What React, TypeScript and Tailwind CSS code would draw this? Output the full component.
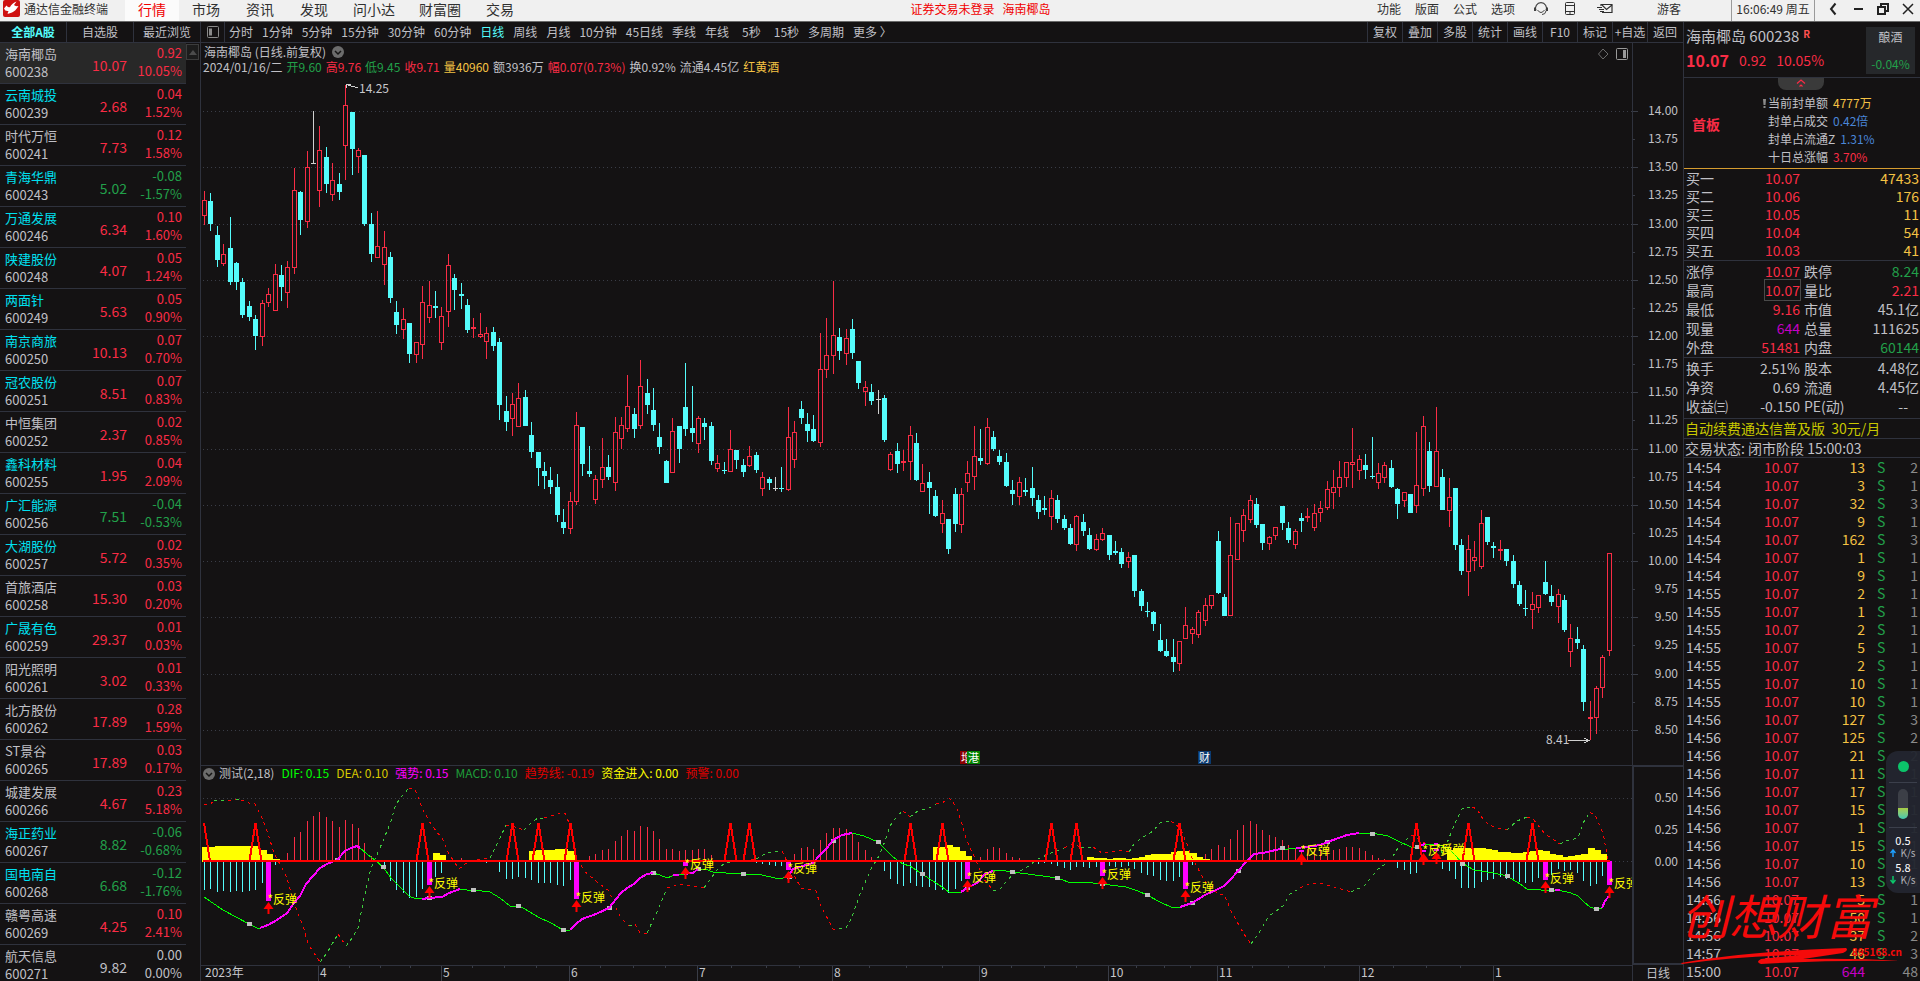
import clsx from "clsx";
import type { ReactNode } from "react";

type Tone = "up" | "down" | "flat" | "warn" | "info" | "last";

const toneClass: Record<Tone, string> = {
  up: "text-[#f92c45]",
  down: "text-[#22a04a]",
  flat: "text-[#c0c0c6]",
  warn: "text-[#f5c244]",
  info: "text-[#4a86d8]",
  last: "text-[#c400c4]",
};

const mainNav = ["行情", "市场", "资讯", "发现", "问小达", "财富圈", "交易"];
const sideNav = ["功能", "版面", "公式", "选项"];
const periods = [
  "分时", "1分钟", "5分钟", "15分钟", "30分钟", "60分钟", "日线", "周线", "月线",
  "10分钟", "45日线", "季线", "年线", "5秒", "15秒", "多周期", "更多 〉",
];
const tools = ["复权", "叠加", "多股", "统计", "画线", "F10", "标记", "+自选", "返回"];

// name, code, price, change, percent, name shown in cyan
const stocks: [string, string, string, string, string, boolean][] = [
  ["海南椰岛", "600238", "10.07", "0.92", "10.05%", false],
  ["云南城投", "600239", "2.68", "0.04", "1.52%", true],
  ["时代万恒", "600241", "7.73", "0.12", "1.58%", false],
  ["青海华鼎", "600243", "5.02", "-0.08", "-1.57%", true],
  ["万通发展", "600246", "6.34", "0.10", "1.60%", true],
  ["陕建股份", "600248", "4.07", "0.05", "1.24%", true],
  ["两面针", "600249", "5.63", "0.05", "0.90%", true],
  ["南京商旅", "600250", "10.13", "0.07", "0.70%", true],
  ["冠农股份", "600251", "8.51", "0.07", "0.83%", true],
  ["中恒集团", "600252", "2.37", "0.02", "0.85%", false],
  ["鑫科材料", "600255", "1.95", "0.04", "2.09%", true],
  ["广汇能源", "600256", "7.51", "-0.04", "-0.53%", true],
  ["大湖股份", "600257", "5.72", "0.02", "0.35%", true],
  ["首旅酒店", "600258", "15.30", "0.03", "0.20%", false],
  ["广晟有色", "600259", "29.37", "0.01", "0.03%", true],
  ["阳光照明", "600261", "3.02", "0.01", "0.33%", false],
  ["北方股份", "600262", "17.89", "0.28", "1.59%", false],
  ["ST景谷", "600265", "17.89", "0.03", "0.17%", false],
  ["城建发展", "600266", "4.67", "0.23", "5.18%", false],
  ["海正药业", "600267", "8.82", "-0.06", "-0.68%", true],
  ["国电南自", "600268", "6.68", "-0.12", "-1.76%", true],
  ["赣粤高速", "600269", "4.25", "0.10", "2.41%", false],
  ["航天信息", "600271", "9.82", "0.00", "0.00%", false],
];

const dayInfo: [string, Tone][] = [
  ["2024/01/16/二", "flat"],
  ["开9.60", "down"],
  ["高9.76", "up"],
  ["低9.45", "down"],
  ["收9.71", "up"],
  ["量40960", "warn"],
  ["额3936万", "flat"],
  ["幅0.07(0.73%)", "up"],
  ["换0.92%", "flat"],
  ["流通4.45亿", "flat"],
  ["红黄酒", "warn"],
];

const priceLabels = Array.from({ length: 23 }, (_, n) => (14 - n * 0.25).toFixed(2));
const priceGrid = [111, 167, 224, 280, 336, 392, 449, 505, 561, 617, 674, 730];

// one candle per entry: kind (r up, c down, w doji) high top bottom low
const candles = `
r191 200 216 225,c193 201 224 231,c226 235 260 267,r244 254 264 266,c217 248 282 285,c262 263 282 290,
c278 282 315 318,c301 306 317 321,c315 319 336 350,r300 303 337 346,r288 294 303 307,r264 274 311 311,
c265 275 287 301,r261 267 293 308,r168 190 268 274,c191 192 220 235,r151 167 222 228,w111 163 164 164,
r126 150 191 207,c147 157 184 193,r163 180 195 201,c173 184 192 200,r85 105 146 180,c112 112 149 175,
r148 150 157 173,c155 155 224 226,c213 224 254 262,r211 246 258 258,r231 247 265 285,c252 257 298 303,
c301 312 325 334,r308 319 330 339,c323 323 354 363,r342 342 355 363,r286 302 345 359,r281 305 318 323,
c291 306 308 318,r307 316 343 350,r254 265 312 327,c274 278 290 310,c283 294 296 309,c299 305 330 333,
r318 327 329 338,r313 334 337 338,r327 333 342 359,c327 332 346 351,c338 342 405 420,c396 411 422 431,
r393 404 419 436,r383 398 427 427,c390 397 426 426,c422 435 452 458,c452 452 468 486,c462 471 476 489,
c467 480 487 494,c474 487 515 522,c509 522 528 534,r492 501 529 534,r412 425 502 505,c427 427 464 476,
c446 471 474 477,r475 479 500 504,r438 467 480 488,c455 467 477 480,r417 432 483 491,r417 425 439 449,
r375 406 429 432,c408 414 429 438,r360 386 426 429,c379 393 405 414,c388 410 425 431,c423 437 447 454,
c460 461 483 483,r418 431 473 473,c426 426 449 463,c363 407 429 436,c386 428 433 442,r416 418 444 453,
c418 423 427 440,c422 426 461 465,r455 463 469 472,c462 470 471 474,r430 449 472 472,c450 450 460 469,
c459 465 472 477,r446 456 466 467,c452 455 470 473,r472 477 489 496,c477 479 483 490,w477 488 489 491,
c467 488 489 492,r407 437 490 491,r421 432 460 468,c401 409 418 424,c413 424 431 442,c415 429 441 442,
r333 369 443 447,r318 355 370 378,r281 335 356 374,c328 337 351 360,r329 338 354 365,c319 329 353 359,
c361 361 383 389,r381 387 392 406,c384 392 401 405,w390 399 400 414,c395 398 440 442,r452 454 470 471,
c443 451 464 473,r450 461 463 471,r426 435 462 480,c433 443 480 481,r464 483 492 492,c472 482 488 514,
c490 496 516 517,r500 513 524 533,c519 519 549 554,c488 494 524 532,r488 494 525 533,r461 473 483 492,
r426 456 477 490,c429 458 461 465,r418 427 464 465,c431 437 449 451,c450 456 462 465,c453 462 486 487,
c480 490 494 505,r477 482 497 505,c478 490 492 496,c467 488 498 506,c495 500 512 519,c496 508 510 515,
r490 498 517 530,c495 500 519 523,c515 519 528 530,c524 528 544 545,r515 516 545 551,c514 522 531 536,
c528 535 549 550,r534 539 550 551,r528 533 540 541,c535 535 555 560,c541 551 553 555,c548 552 564 568,
r552 557 562 568,c555 555 591 597,c589 591 606 611,c602 611 612 617,c611 612 624 631,c624 640 651 652,
c639 651 656 657,c639 657 662 672,r641 641 664 671,r607 625 639 639,r627 629 634 644,r610 612 635 638,
r598 605 621 626,r595 595 606 609,c531 541 593 594,c594 597 616 616,r517 555 616 616,r523 523 560 560,
r509 515 531 542,r495 500 520 523,c498 504 525 528,c524 524 543 550,r536 537 544 550,r527 527 536 540,
c506 506 523 530,c522 528 540 543,r529 531 545 549,c513 518 521 532,r508 516 518 522,r504 513 528 531,
r501 508 513 522,r481 489 508 510,r470 487 493 509,r461 477 488 497,r462 462 478 487,r428 462 465 488,
r455 459 471 480,c454 465 470 479,c437 476 477 479,r463 473 483 489,r462 465 478 483,c460 468 487 488,
c488 489 504 519,r492 492 501 507,c494 494 513 513,r432 485 506 513,r416 426 489 496,c442 451 486 492,
r407 451 487 487,c469 477 510 510,r478 497 511 527,c488 488 545 550,c539 545 571 575,r535 549 572 596,
r541 557 561 571,r510 523 567 569,c517 517 542 545,c542 546 548 558,r540 549 551 560,c549 549 561 566,
c555 561 584 588,c581 585 604 606,c590 608 609 616,r592 604 610 629,r595 595 608 613,c561 582 594 595,
c585 596 602 606,r589 594 607 623,c595 600 630 632,r624 638 652 667,c627 639 643 649,c645 649 702 711,
r701 717 719 740,r686 688 718 734,r655 657 688 698,r553 553 651 656`
  .trim()
  .split(/,\s*/)
  .map((row) => ({ kind: row[0], v: row.slice(1).split(" ").map(Number) }));

// centre of the n-th bar, snapped to a pixel
const barX = (n: number) => Math.floor(204.5 + n * 6.415) + 0.5;

type Run = [number, number[]];

const upBars: Run[] = [
  [13, [853, 837, 832, 821, 816, 812, 817, 821, 827, 820, 824, 828, 843, 856]],
  [40, [858]],
  [60, [856, 854, 850, 849, 841, 836, 830, 831, 826, 827, 831, 839, 849, 849, 851, 850, 850, 849, 849, 855]],
  [92, [854, 848, 847, 849, 840, 833, 828, 828, 829, 833, 842, 850, 857]],
  [121, [857, 849, 847, 848, 853, 857, 858]],
  [156, [854, 849, 845, 847, 839, 830, 825, 821, 824, 830, 835, 837, 840, 845, 848, 851, 849, 849, 849, 849, 850, 849, 847, 847, 848, 851, 855, 858, 859]],
];

const downBars: Run[] = [
  [0, [890, 889, 892, 891, 892, 891, 892, 891, 890, 883]],
  [11, [865]],
  [28, [869, 881, 890, 893, 898, 897, 889]],
  [36, [877, 873]],
  [44, [863, 862, 872, 879, 879, 877, 878, 880, 883, 883, 883, 885, 886, 880]],
  [86, [863, 864, 865, 866, 866]],
  [106, [871, 879, 884, 886, 883, 886, 887, 887, 890, 890, 893, 889, 881]],
  [130, [864, 863, 864, 866, 868, 870, 867, 867, 868, 867]],
  [141, [866, 867, 867, 866, 869, 873, 875, 876, 880, 881, 881, 877]],
  [154, [865]],
  [186, [868, 870, 874, 873, 864]],
  [193, [869, 871, 879, 888, 888, 888, 882, 880, 879, 877, 879, 880, 882, 883, 882, 878]],
  [210, [875, 869, 871, 870, 873, 881, 886, 884, 876]],
];

const fundBars: Run[] = [
  [0, [847, 847, 846, 846, 846, 846, 846, 846, 846, 850, 854, 859]],
  [36, [853, 855]],
  [51, [851, 850, 850, 850, 849, 849, 851]],
  [114, [847, 847, 845, 847, 851, 856]],
  [138, [857, 858, 858, 859, 858, 858, 859, 858, 857, 855, 854, 854, 854, 852, 851, 851, 853, 857, 859]],
  [194, [850, 848, 848, 848, 848, 848, 849, 850, 852, 852, 853, 853, 852, 851, 850, 851, 854, 855, 857, 856, 855, 854, 848, 850, 854]],
];

const warnings = [0, 8, 34, 48, 52, 57, 82, 85, 110, 115, 132, 136, 152, 189, 197, 207];

// bar index and the level that the marker reaches
const rebounds: [number, number][] = [
  [10, 901], [35, 885], [58, 899], [75, 866], [91, 870], [119, 879], [140, 876],
  [153, 889], [171, 852], [190, 852], [192, 851], [209, 880], [219, 885],
];

const difLine =
  "204,897 223,910 236,917 249,924 257,928 260,928 268,925 277,920 287,913 294,903 300,896 306,884 313,876 320,868 327,864 337,860 345,851 351,848 357,846 360,848 367,854 376,861 383,867 391,878 400,887 409,896 416,899 429,898 442,897 449,893 460,889 467,890 473,890 490,892 500,898 510,906 518,906 525,909 538,917 551,923 563,930 570,930 576,924 582,919 596,914 609,908 616,899 621,893 627,888 634,884 640,878 647,874 653,873 660,875 667,878 672,876 685,874 693,873 698,869 705,869 713,872 726,873 743,874 762,875 779,879 787,877 793,869 803,866 813,863 820,855 827,848 833,840 842,835 852,833 864,836 878,842 885,849 893,857 903,864 910,866 922,874 936,883 942,887 949,892 956,893 961,892 967,888 977,883 985,874 993,871 999,870 1012,872 1028,874 1057,878 1071,883 1083,882 1102,884 1126,887 1138,891 1147,895 1160,902 1173,908 1180,907 1192,903 1205,895 1216,890 1224,886 1231,879 1238,871 1246,862 1254,854 1263,853 1280,849 1288,849 1296,848 1307,847 1320,845 1333,840 1347,835 1359,833 1372,833 1388,836 1398,841 1411,847 1418,847 1427,844 1437,844 1449,849 1456,856 1462,863 1474,870 1494,873 1507,876 1520,884 1527,889 1541,890 1558,890 1571,893 1578,896 1584,902 1590,907 1596,909 1602,908 1605,901 1609,896";

const strongLines = [
  "260,928 268,925 277,920 287,913 294,903 300,896 306,884 313,876 320,868 327,864 337,860 345,851 351,848 357,846 360,848",
  "422,899 429,898 442,897 449,893 460,889",
  "570,930 576,924 582,919 596,914 609,908 616,899 621,893 627,888 634,884 640,878 647,874 653,873",
  "673,875 679,875",
  "684,874 693,873 698,869",
  "787,877 793,869 803,866 813,863 820,855 827,848 833,840 842,835 852,833",
  "961,892 967,888 977,883 985,874 993,871",
  "1180,907 1192,903 1205,895 1216,890 1224,886 1231,879 1238,871 1246,862 1254,854 1263,853 1280,849",
  "1296,848 1307,847 1320,845 1333,840 1347,835 1359,833",
  "1419,846 1425,844",
  "1434,844 1438,844",
  "1555,890 1560,890",
  "1602,908 1605,901 1609,896",
];

const handles: [number, number][] = [
  [249, 924], [337, 860], [383, 867], [429, 898], [473, 890], [518, 906], [563, 930], [609, 908],
  [653, 873], [698, 869], [743, 874], [789, 877], [833, 841], [878, 842], [922, 874], [967, 888],
  [1012, 872], [1057, 878], [1102, 884], [1147, 895], [1192, 903], [1238, 871], [1282, 848],
  [1327, 842], [1372, 834], [1417, 847], [1462, 864], [1507, 876], [1551, 890], [1596, 909],
];

const trendSegments: ["r" | "g", string][] = [
  ["r", "204,804 210,805 214,800"],
  ["g", "214,800 228,801"],
  ["r", "228,801 236,799"],
  ["g", "236,799 241,800"],
  ["r", "241,800 249,803 255,804 262,818 268,834 274,853 282,868 287,878 294,903 304,929 308,944 320,962"],
  ["g", "320,962 327,953 338,934"],
  ["r", "338,934 346,946"],
  ["g", "346,946 353,937 358,928 364,898 371,868 383,841 391,821 396,804 403,795 409,788"],
  ["r", "409,788 415,789 422,808 429,821 436,831 442,838 449,854 459,869 465,864 473,860 490,858"],
  ["g", "490,858 500,838 506,825"],
  ["r", "506,825 512,826 524,830"],
  ["g", "524,830 531,823 538,818 544,818"],
  ["r", "544,818 558,814 565,813 569,823 576,856 584,871 596,881 609,891 614,904 621,918 629,926"],
  ["g", "629,926 635,924"],
  ["r", "635,924 640,933 647,933"],
  ["g", "647,933 656,914 667,888"],
  ["r", "667,888 679,884 693,886 704,888"],
  ["g", "704,888 711,878 718,869 726,862 730,862"],
  ["r", "730,862 756,859"],
  ["g", "756,859 767,853 775,851 782,851"],
  ["r", "782,851 789,866 801,888 816,891 820,904 833,929 839,929"],
  ["g", "839,929 846,928 852,917 860,894 871,869 879,856 885,841 890,826 898,815 903,811"],
  ["r", "903,811 910,817"],
  ["g", "910,817 918,811 929,808 936,804"],
  ["r", "936,804 942,803 949,798 956,806 961,821 967,841 974,856 983,878 993,890"],
  ["g", "993,890 999,890 1007,881 1012,875 1026,868 1038,859 1051,853 1064,848"],
  ["r", "1064,848 1073,844 1081,847"],
  ["g", "1081,847 1093,847"],
  ["r", "1093,847 1102,853 1122,850 1129,852"],
  ["g", "1129,852 1134,844 1142,838 1153,831 1160,823 1171,821"],
  ["r", "1171,821 1180,828 1187,844 1192,858 1205,881 1218,894 1224,894 1232,913 1244,934 1251,944"],
  ["g", "1251,944 1260,931 1269,916 1283,906 1290,894 1300,888"],
  ["r", "1300,888 1309,884 1320,883 1331,886 1351,892"],
  ["g", "1351,892 1364,886 1378,869 1390,861 1398,848 1411,835"],
  ["r", "1411,835 1421,841 1435,848"],
  ["g", "1435,848 1443,853 1449,838 1456,821 1462,809 1472,807"],
  ["r", "1472,807 1477,809 1484,821 1494,827 1507,830"],
  ["g", "1507,830 1517,821 1527,817"],
  ["r", "1527,817 1533,819 1545,834 1560,844"],
  ["g", "1560,844 1566,841 1578,838 1583,823 1590,812"],
  ["r", "1590,812 1596,817 1603,833 1607,854 1609,864"],
];

const indicatorLegend: [string, string][] = [
  ["DIF: 0.15", "text-[#00ff00]"],
  ["DEA: 0.10", "text-[#d8c800]"],
  ["强势: 0.15", "text-[#ff00ff]"],
  ["MACD: 0.10", "text-[#1f9e3a]"],
  ["趋势线: -0.19", "text-[#e00000]"],
  ["资金进入: 0.00", "text-[#ffff00]"],
  ["预警: 0.00", "text-[#e00000]"],
];

const months: [number, string][] = [
  [318, "4"], [441, "5"], [569, "6"], [697, "7"], [832, "8"], [979, "9"],
  [1108, "10"], [1217, "11"], [1359, "12"], [1493, "1"],
];
const weekTicks = [
  349, 380, 410, 472, 504, 536, 600, 633, 665, 731, 766, 799, 869, 906, 942, 1011,
  1044, 1076, 1136, 1164, 1190, 1252, 1288, 1324, 1393, 1426, 1460,
];

const limitInfo: [string, string, Tone][] = [
  ["当前封单额", "4777万", "warn"],
  ["封单占成交", "0.42倍", "info"],
  ["封单占流通Z", "1.31%", "info"],
  ["十日总涨幅", "3.70%", "up"],
];

const bids = [
  ["买一", "10.07", "47433"],
  ["买二", "10.06", "176"],
  ["买三", "10.05", "11"],
  ["买四", "10.04", "54"],
  ["买五", "10.03", "41"],
];

type Stat = [string, string, Tone, string, string, Tone];

const dayStats: Stat[] = [
  ["涨停", "10.07", "up", "跌停", "8.24", "down"],
  ["最高", "10.07", "up", "量比", "2.21", "up"],
  ["最低", "9.16", "up", "市值", "45.1亿", "flat"],
  ["现量", "644", "last", "总量", "111625", "flat"],
  ["外盘", "51481", "up", "内盘", "60144", "down"],
];
const baseStats: Stat[] = [
  ["换手", "2.51%", "flat", "股本", "4.48亿", "flat"],
  ["净资", "0.69", "flat", "流通", "4.45亿", "flat"],
  ["收益㈢", "-0.150", "flat", "PE(动)", "--", "flat"],
];

const ticks: [string, number, number][] = [
  ["14:54", 13, 2], ["14:54", 3, 1], ["14:54", 32, 3], ["14:54", 9, 1], ["14:54", 162, 3],
  ["14:54", 1, 1], ["14:54", 9, 1], ["14:55", 2, 1], ["14:55", 1, 1], ["14:55", 2, 1],
  ["14:55", 5, 1], ["14:55", 2, 1], ["14:55", 10, 1], ["14:55", 10, 1], ["14:56", 127, 3],
  ["14:56", 125, 2], ["14:56", 21, 2], ["14:56", 11, 1], ["14:56", 17, 1], ["14:56", 15, 1],
  ["14:56", 1, 1], ["14:56", 15, 1], ["14:56", 10, 1], ["14:56", 13, 3], ["14:56", 5, 1],
  ["14:56", 50, 1], ["14:56", 37, 2], ["14:57", 46, 3], ["15:00", 644, 48],
];

function TopBar() {
  return (
    <header className="flex h-[22px] shrink-0 items-stretch border-b border-[#6a6a6a] bg-[#f0f0f0] text-xs leading-[18px] text-[#303030]">
      <div className="flex w-[125px] shrink-0 items-center gap-1 pb-1 pl-[3px]">
        <svg viewBox="0 0 17 17" className="h-[17px] w-[17px] shrink-0">
          <rect width="17" height="17" rx="2" fill="#cf1111" />
          <path d="M1 8.5 L3.5 5.5 Q5 8 7 7 Q9 3 13.5 1.5 L11 5 Q12 6.500 15.500 6 Q12.500 11 9 12.500 Q5.500 14 4.500 13.500 Q5 12 5.500 11 Q2 11.500 1 8.500Z" fill="#fff" />
        </svg>
        <h1 className="whitespace-nowrap">通达信金融终端</h1>
      </div>
      <nav className="flex shrink-0 text-sm leading-[18px]">
        {mainNav.map((item, n) => (
          <button
            key={item}
            type="button"
            className={clsx(
              "flex items-start justify-center whitespace-nowrap",
              item.length > 2 ? "w-[66px]" : "w-[54px]",
              n === 0 && "bg-[#fbfbfb] text-[#f00000]",
            )}
          >
            {item}
          </button>
        ))}
      </nav>
      <div className="flex flex-1 items-start justify-center gap-2 whitespace-nowrap pl-16 text-[#f00000]">
        <span>证券交易未登录</span>
        <span>海南椰岛</span>
      </div>
      <div className="flex shrink-0 items-stretch">
        {sideNav.map((item) => (
          <button key={item} type="button" className="flex w-[38px] items-start justify-center">
            {item}
          </button>
        ))}
        <button type="button" aria-label="客服" className="ml-[9px] flex w-5 items-start justify-center pt-px">
          <svg viewBox="0 0 16 16" className="h-4 w-4" fill="none" stroke="#404040">
            <path d="M3 9.500 A5.500 5.500 0 1 1 13 9.500" strokeWidth="1.200" />
            <path d="M4.500 9 Q8 14 11.500 9" strokeWidth="1" />
            <path d="M2 6.500 V10 M14 6.500 V10" strokeWidth="2" />
            <path d="M13 10 Q12.500 13.500 9 13.500" />
          </svg>
        </button>
        <button type="button" aria-label="手机版" className="ml-[9px] flex w-5 items-start justify-center pt-px">
          <svg viewBox="0 0 16 16" className="h-4 w-4" fill="none" stroke="#303030">
            <rect x="3.500" y="1.500" width="9" height="12" rx="1" />
            <path d="M3.500 4.500 H12.500 M3.500 10.500 H12.500 M7 12 H9" />
          </svg>
        </button>
        <button type="button" aria-label="消息" className="ml-[15px] flex w-5 items-start justify-center pt-px">
          <svg viewBox="0 0 18 16" className="h-4 w-[18px]" fill="none" stroke="#303030" strokeWidth="1.200">
            <path d="M5 5 V3.500 H16 V11.500 H6" />
            <path d="M6 4 L10.500 8.500 L16 4" />
            <path d="M1 6.500 H6 M3 8.500 H8 M4 10.500 H8" strokeWidth="1" />
          </svg>
        </button>
        <button type="button" className="ml-[38px] flex w-8 items-start justify-center">
          游客
        </button>
        <time className="ml-[46px] flex w-[84px] items-start justify-center whitespace-nowrap border-x border-[#9a9a9a]">
          16:06:49 周五
        </time>
        <div className="ml-[5px] flex">
          {(["后退", "最小化", "还原", "关闭"] as const).map((name) => (
            <button key={name} type="button" aria-label={name} className="flex w-[25px] items-start justify-center pt-0.5">
              <svg viewBox="0 0 14 14" className="h-3.5 w-3.5" fill="none" stroke="#222" strokeWidth="2">
                {name === "后退" && <path d="M9.500 1.500 L5 7 L9.500 12.500" />}
                {name === "最小化" && <path d="M3 7 H12" />}
                {name === "还原" && <path d="M5 4 V2 H12 V9 H10 M2 5 H9 V12 H2 Z" />}
                {name === "关闭" && <path d="M2 2 L12 12 M12 2 L2 12" strokeWidth="1.500" />}
              </svg>
            </button>
          ))}
        </div>
      </div>
    </header>
  );
}

function StockList() {
  return (
    <aside className="flex w-[201px] shrink-0 flex-col border-r border-[#2f323d]">
      <div className="flex h-[21px] shrink-0 border-b border-[#2f323d] text-xs leading-[18px]" role="tablist">
        {["全部A股", "自选股", "最近浏览"].map((tab, n) => (
          <button
            key={tab}
            type="button"
            role="tab"
            aria-selected={n === 0}
            className={clsx("flex-1 text-center", n === 0 ? "font-bold text-[#54fcfc]" : "border-l border-[#2f323d]")}
          >
            {tab}
          </button>
        ))}
      </div>
      <div className="flex min-h-0 flex-1 overflow-hidden">
        <ul className="w-[186px] shrink-0">
          {stocks.map(([name, code, price, change, percent, linked], n) => {
            const tone = toneClass[change === "0.00" ? "flat" : change.startsWith("-") ? "down" : "up"];
            return (
              <li
                key={code}
                className={clsx(
                  "flex h-[41px] items-center border-b border-[#2f323d] pl-[5px] pr-1 text-[13px] leading-[18px]",
                  n === 0 && "bg-[#282828]",
                )}
              >
                <div className="w-14">
                  <div className={clsx("whitespace-nowrap", linked && "text-[#00e0f0]")}>{name}</div>
                  <div>{code}</div>
                </div>
                <div className={clsx("w-[66px] pt-1 text-right text-sm", tone)}>{price}</div>
                <div className={clsx("flex-1 pb-0.5 text-right", tone)}>
                  <div>{change}</div>
                  <div>{percent}</div>
                </div>
              </li>
            );
          })}
        </ul>
        <button
          type="button"
          aria-label="向上滚动"
          className="mt-px flex h-4 w-[13px] items-center justify-center border border-[#3c3c3c] bg-[#1c1c1c]"
        >
          <svg viewBox="0 0 8 5" className="h-[5px] w-2">
            <path d="M4 0 L8 5 H0 Z" fill="#4c4c4c" />
          </svg>
        </button>
      </div>
    </aside>
  );
}

function PeriodBar() {
  return (
    <div className="flex h-[21px] shrink-0 items-stretch border-b border-[#2f323d] pr-px text-xs leading-[18px]">
      <button type="button" aria-label="侧栏" className="flex w-6 items-center justify-center border-r border-[#2f323d]">
        <svg viewBox="0 0 12 12" className="h-3 w-3" fill="none" stroke="#8a8a8a">
          <rect x="0.500" y="0.500" width="11" height="11" rx="1" />
          <rect x="2" y="2.500" width="3" height="7" fill="#8a8a8a" stroke="none" />
        </svg>
      </button>
      <div className="flex flex-1 gap-[9px] overflow-hidden whitespace-nowrap pl-1">
        {periods.map((item) => (
          <button
            key={item}
            type="button"
            className={clsx(item === "日线" && "text-[#54fcfc]", item === "5秒" && "px-1")}
          >
            {item}
          </button>
        ))}
      </div>
      {tools.map((item) => (
        <button key={item} type="button" className="w-[35px] shrink-0 whitespace-nowrap border-l border-[#2f323d] text-center">
          {item}
        </button>
      ))}
    </div>
  );
}

function RoundToggle() {
  return (
    <button type="button" aria-label="展开">
      <svg viewBox="0 0 12 12" className="h-3 w-3">
        <circle cx="6" cy="6" r="6" fill="#6c6c6c" />
        <path d="M3 5 L6 8 L9 5" fill="none" stroke="#151515" strokeWidth="1.500" />
      </svg>
    </button>
  );
}

function Badge({ x, fill, children }: { x: number; fill: string; children: ReactNode }) {
  return (
    <g>
      <rect x={x} y="751" width="13" height="13" fill={fill} />
      <text x={x + 1} y="762" fontSize="11" fill="#fff">
        {children}
      </text>
    </g>
  );
}

function PriceChart() {
  return (
    <svg viewBox="201 76 1431 689" className="min-h-0 w-full flex-1" shapeRendering="crispEdges">
      {priceGrid.map((y) => (
        <line key={y} x1="203" x2="1632" y1={y + 0.5} y2={y + 0.5} stroke="#3a3d47" strokeDasharray="1 3" />
      ))}
      {candles.map(({ kind, v: [high, top, bottom, low] }, n) => {
        const x = barX(n);
        const color = kind === "r" ? "#f92c45" : kind === "c" ? "#54fcfc" : "#d0d0d0";
        return (
          <g key={n} stroke={color}>
            {kind === "r" ? (
              <>
                <path d={`M${x} ${high}V${top}M${x} ${bottom}V${low}`} />
                <rect x={x - 2} y={top + 0.5} width="4" height={Math.max(bottom - top - 1, 1)} fill="none" />
              </>
            ) : (
              <>
                <path d={`M${x} ${high}V${low}`} />
                <rect x={x - 2.5} y={top} width="5" height={bottom - top} fill={color} stroke="none" />
              </>
            )}
          </g>
        );
      })}
      <g fill="none" stroke="#d0d0d0">
        <path d="M346 84.500 L358 88 M346 84.500 H351 M346 84.500 V88" />
        <path d="M1568 740.500 H1589 M1584 738 L1589 740.500 L1584 743" />
      </g>
      <g fill="#c8c8cc" fontSize="12">
        <text x="359" y="93">14.25</text>
        <text x="1546" y="744">8.41</text>
      </g>
      <Badge x={960} fill="#8b0000">增</Badge>
      <Badge x={967} fill="#008000">港</Badge>
      <Badge x={1198} fill="#0a3a70">财</Badge>
    </svg>
  );
}

function IndicatorChart() {
  return (
    <svg viewBox="201 782 1431 183" className="h-[183px] w-full shrink-0">
      <g shapeRendering="crispEdges">
        <path d="M203 798.500 H1632 M203 861.500 H1632" stroke="#3a3d47" strokeDasharray="1 3" />
        {upBars.map(([start, tops]) =>
          tops.map((y, n) => <path key={start + n} d={`M${barX(start + n)} ${y}V861`} stroke="#f92c45" />),
        )}
        {downBars.map(([start, ends]) =>
          ends.map((y, n) => <path key={start + n} d={`M${barX(start + n)} 861V${y}`} stroke="#54fcfc" />),
        )}
        {fundBars.map(([start, tops]) =>
          tops.map((y, n) => (
            <rect key={start + n} x={barX(start + n) - 2.5} y={y} width="7" height={862 - y} fill="#ffff00" />
          )),
        )}
        {trendSegments.map(([tone, points]) => (
          <polyline
            key={points}
            points={points}
            fill="none"
            stroke={tone === "r" ? "#ff0000" : "#3ccb3c"}
            strokeDasharray="3 4"
          />
        ))}
        <polyline points={difLine} fill="none" stroke="#00ff00" />
        {handles.map(([x, y]) => (
          <rect key={x} x={x - 2} y={y - 2} width="5" height="4" fill="#c0c0c0" />
        ))}
        {strongLines.map((points) => (
          <polyline key={points} points={points} fill="none" stroke="#ff00ff" strokeWidth="2" />
        ))}
        {rebounds.map(([n, y]) => (
          <rect key={n} x={barX(n) - 2.5} y={y < 861 ? y - 2 : 861} width="5" height={y < 861 ? 2 : y - 861} fill="#ff00ff" />
        ))}
        <path d="M203 861 H1610" stroke="#ff0000" strokeWidth="2" />
        {warnings.map((n) => (
          <path
            key={n}
            d={n === 0 ? "M204 823 L210 861" : `M${barX(n) - 6} 861 L${barX(n)} 823 L${barX(n) + 6} 861`}
            fill="none"
            stroke="#ff0000"
            strokeWidth="2"
          />
        ))}
      </g>
      {rebounds.map(([n, y]) => {
        const x = barX(n);
        return (
          <g key={n}>
            <path d={`M${x} ${y + 1}L${x + 5} ${y + 8}H${x - 5}Z`} fill="#ff0000" />
            <path d={`M${x} ${y + 6}V${y + 13}`} stroke="#ff0000" strokeWidth="2" />
            <text x={x - 1} y={y + 3} fontSize="12" fill="#ffff00">
              *反弹
            </text>
          </g>
        );
      })}
    </svg>
  );
}

function DateAxis() {
  return (
    <svg viewBox="201 966 1431 15" className="h-[15px] w-full shrink-0">
      <path
        d={months.map(([x]) => `M${x + 0.5} 966V981`).join("") + weekTicks.map((x) => `M${x + 0.5} 966V968`).join("")}
        stroke="#3a3d47"
      />
      <g fill="#c8c8cc" fontSize="12">
        <text x="205" y="977">2023年</text>
        {months.map(([x, label]) => (
          <text key={x} x={x + 2} y="977">
            {label}
          </text>
        ))}
      </g>
    </svg>
  );
}

function Charts() {
  return (
    <div className="flex min-h-0 flex-1">
      <div className="flex min-w-0 flex-1 flex-col">
        <div className="flex h-[17px] shrink-0 items-center gap-1.5 pl-[3px] pr-1 text-xs leading-4">
          <h2>海南椰岛 (日线.前复权)</h2>
          <RoundToggle />
          <svg viewBox="0 0 30 12" className="ml-auto mt-1 h-3 w-[30px]" fill="none" stroke="#6c6c6c">
            <path d="M5 1 L10 6 L5 11 L0.500 6 Z" />
            <rect x="18.500" y="0.500" width="11" height="11" rx="1" stroke="#9a9a9a" />
            <rect x="25" y="2" width="3" height="8" fill="#9a9a9a" stroke="none" />
          </svg>
        </div>
        <p className="flex h-4 shrink-0 gap-1 whitespace-nowrap pl-0.5 text-xs leading-[14px]">
          {dayInfo.map(([text, tone]) => (
            <span key={text} className={toneClass[tone]}>
              {text}
            </span>
          ))}
        </p>
        <PriceChart />
        <div className="flex h-[17px] shrink-0 gap-1 whitespace-nowrap border-t border-[#2f323d] pl-0.5 text-xs leading-[14px]">
          <RoundToggle />
          <p className="flex gap-[7px]">
            <span>测试(2,18)</span>
            {indicatorLegend.map(([text, color]) => (
              <span key={text} className={color}>
                {text}
              </span>
            ))}
          </p>
        </div>
        <IndicatorChart />
        <div className="flex h-4 shrink-0 flex-col border-t border-[#2f323d]">
          <DateAxis />
        </div>
      </div>
      <div className="flex w-[51px] shrink-0 flex-col text-xs leading-[14px]">
        <ol className="flex min-h-0 flex-1 flex-col justify-between border-l border-[#2f323d] pb-[27px] pt-[60px]">
          {priceLabels.map((label, n) => (
            <li key={label} className="flex h-4 justify-between pr-[5px]">
              <span className={clsx("mt-2 h-px bg-[#3a3d47]", n % 2 ? "w-0.5" : "w-[5px]")} />
              {label}
            </li>
          ))}
        </ol>
        <ol className="flex h-[200px] shrink-0 flex-col border-2 border-r-0 border-[#2f323d] pt-[23px]">
          <li className="flex h-8 items-start justify-end pr-[5px]">0.50</li>
          <li className="flex h-8 items-start justify-end pr-[5px]">0.25</li>
          <li className="flex h-4 items-start justify-end pr-[5px]">0.00</li>
        </ol>
        <button type="button" className="h-4 shrink-0 border-l border-[#2f323d] text-center">
          日线
        </button>
      </div>
    </div>
  );
}

function StatTable({ rows }: { rows: Stat[] }) {
  return (
    <table className="w-full table-fixed">
      <tbody>
        {rows.map(([a, av, at, b, bv, bt]) => (
          <tr key={a} className="h-[19px] whitespace-nowrap">
            <th scope="row" className="w-[50px] pl-0.5 text-left font-normal">{a}</th>
            <td className={clsx("w-[66px] text-right", toneClass[at])}>
              <span className={clsx(a === "最高" && "outline outline-1 outline-[#4a4a4a]")}>{av}</span>
            </td>
            <th scope="row" className="w-[50px] pl-1 text-left font-normal">{b}</th>
            <td className={clsx("text-right", bv === "--" ? "pr-3" : "pr-px", toneClass[bt])}>{bv}</td>
          </tr>
        ))}
      </tbody>
    </table>
  );
}

function QuotePanel() {
  return (
    <aside className="flex w-[237px] shrink-0 flex-col overflow-hidden border-l border-[#2f323d] text-sm leading-[18px]">
      <div className="flex h-14 shrink-0 justify-between border-b border-[#2f323d] pr-[5px] pt-1">
        <div className="pl-0.5">
          <h2 className="flex h-[21px] whitespace-nowrap text-[15px] leading-5">
            海南椰岛 600238
            <sup className="top-0 ml-1 pt-0.5 text-[10px] font-bold leading-3 text-[#ff5050]">R</sup>
          </h2>
          <p className="flex items-center gap-2.5 pt-0.5 text-[#f92c45]">
            <strong className="text-base leading-[22px]">10.07</strong>
            <span>0.92</span>
            <span>10.05%</span>
          </p>
        </div>
        <a href="#industry" className="mt-px flex h-[47px] w-[49px] flex-col items-center justify-between bg-[#26282b] pb-0.5 pt-0.5 text-xs">
          <span>酿酒</span>
          <span className="text-[#22a04a]">-0.04%</span>
        </a>
      </div>
      <button
        type="button"
        aria-label="收起"
        className="ml-[94px] flex h-3 w-[46px] shrink-0 items-start justify-center rounded-b-lg bg-[#3a3a3a]"
      >
        <svg viewBox="0 0 10 8" className="mt-px h-2 w-2.5" fill="none" stroke="#f92c45" strokeWidth="1.200">
          <path d="M1 4.500 L5 1 L9 4.500 M3.500 7.500 L5 6 L6.500 7.500" />
        </svg>
      </button>
      <div className="flex shrink-0 border-b border-[#d69c30] pb-0.5 pt-1 text-xs">
        <strong className="flex w-[78px] items-center pb-3 pl-2 text-sm text-[#f92c45]">首板</strong>
        <svg viewBox="0 0 6 18" className="h-[18px] w-1.5 shrink-0" fill="#8a8a8a">
          <path d="M1 5 H4 L3.500 11 H1.500 Z M1.500 12 H3.500 V14 H1.500 Z" />
        </svg>
        <ul>
          {limitInfo.map(([label, value, tone]) => (
            <li key={label} className="flex h-[18px] gap-[5px] whitespace-nowrap leading-[18px]">
              {label}
              <span className={toneClass[tone]}>{value}</span>
            </li>
          ))}
        </ul>
      </div>
      <div className="shrink-0 border-b border-[#2f323d] pb-px">
        <table className="w-full">
          <tbody>
            {bids.map(([level, price, volume]) => (
              <tr key={level} className="h-[18px]">
                <th scope="row" className="w-[50px] pl-0.5 text-left font-normal">{level}</th>
                <td className="w-[66px] text-right text-[#f92c45]">{price}</td>
                <td className="pr-px text-right text-[#f5c244]">{volume}</td>
              </tr>
            ))}
          </tbody>
        </table>
      </div>
      <div className="shrink-0 border-b border-[#2f323d] pb-px">
        <StatTable rows={dayStats} />
      </div>
      <div className="shrink-0 border-b border-[#2f323d] pb-[3px]">
        <StatTable rows={baseStats} />
      </div>
      <a href="#renew" className="h-5 shrink-0 whitespace-pre border-b border-[#2f323d] pl-px text-[#c8c800]">
        自动续费通达信普及版  30元/月
      </a>
      <p className="h-[19px] shrink-0 border-b border-[#2f323d] pl-px">交易状态: 闭市阶段 15:00:03</p>
      <table className="w-full shrink-0">
        <tbody>
          {ticks.map(([time, volume, count], n) => (
            <tr key={n} className="h-[18px]">
              <td className="w-[50px] pl-0.5">{time}</td>
              <td className="w-[65px] text-right text-[#f92c45]">10.07</td>
              <td className={clsx("w-[66px] text-right", volume === 644 ? "text-[#c400c4]" : "text-[#f5c244]")}>{volume}</td>
              <td className="w-8 pl-3 text-[#22a04a]">{volume !== 644 && "S"}</td>
              <td className="pr-0.5 text-right text-[#8a8a8a]">{count}</td>
            </tr>
          ))}
        </tbody>
      </table>
    </aside>
  );
}

function NetworkWidget() {
  return (
    <div className="absolute right-0 top-[751px] flex h-[142px] w-[34px] flex-col items-center rounded-l-xl bg-[#23262f]/95 text-[11px] leading-[13px] text-white">
      <span className="mt-2.5 h-[11px] w-[11px] shrink-0 rounded-full bg-[#0cc46a]" />
      <span className="mt-2.5 h-px w-7 shrink-0 bg-[#3b3f4b]" />
      <span className="mt-1.5 flex h-[30px] w-2.5 shrink-0 flex-col justify-end overflow-hidden rounded-full bg-[#3c3f47]">
        <span className="h-[11px] bg-linear-to-b from-[#a8cc40] to-[#38c8b0]" />
      </span>
      <span className="mt-2 h-px w-7 shrink-0 bg-[#3b3f4b]" />
      <span className="mt-1.5">0.5</span>
      <span className="flex items-center gap-1 whitespace-nowrap text-[10px] leading-3 text-[#b0b0b4]">
        <svg viewBox="0 0 6 8" className="h-2 w-1.5" fill="none" stroke="#1ea0ff" strokeWidth="1.500">
          <path d="M3 8 V1 M0.500 4 L3 1 L5.500 4" />
        </svg>
        K/s
      </span>
      <span className="mt-0.5">5.8</span>
      <span className="flex items-center gap-1 whitespace-nowrap text-[10px] leading-3 text-[#b0b0b4]">
        <svg viewBox="0 0 6 8" className="h-2 w-1.5" fill="none" stroke="#0cc46a" strokeWidth="1.500">
          <path d="M3 0 V7 M0.500 4 L3 7 L5.500 4" />
        </svg>
        K/s
      </span>
    </div>
  );
}

function Watermark() {
  return (
    <div className="pointer-events-none absolute right-[18px] top-[882px] w-[221px] text-[#f50a0a]">
      <p className="whitespace-nowrap text-[48px] italic leading-[64px]">创想财富</p>
      <svg viewBox="0 0 221 18" className="h-[18px] w-full" fill="#f50a0a">
        <path d="M0 17 Q60 6 165 2 Q168 4 162 7 L122 13 Q175 12 219 15 Q150 14 80 18 Q74 16 80 13 L118 9 Q60 10 1 18 Z" />
      </svg>
      <p className="absolute right-0 top-16 text-[10px] font-bold leading-3">895168.cn</p>
    </div>
  );
}

export default function App() {
  return (
    <div className="relative flex h-screen min-w-[1280px] flex-col overflow-hidden bg-[#141213] font-['Noto_Sans_CJK_SC',sans-serif] text-[#c0c0c6]">
      <TopBar />
      <div className="flex min-h-0 flex-1">
        <StockList />
        <main className="flex min-w-0 flex-1 flex-col">
          <PeriodBar />
          <Charts />
        </main>
        <QuotePanel />
      </div>
      <NetworkWidget />
      <Watermark />
    </div>
  );
}
